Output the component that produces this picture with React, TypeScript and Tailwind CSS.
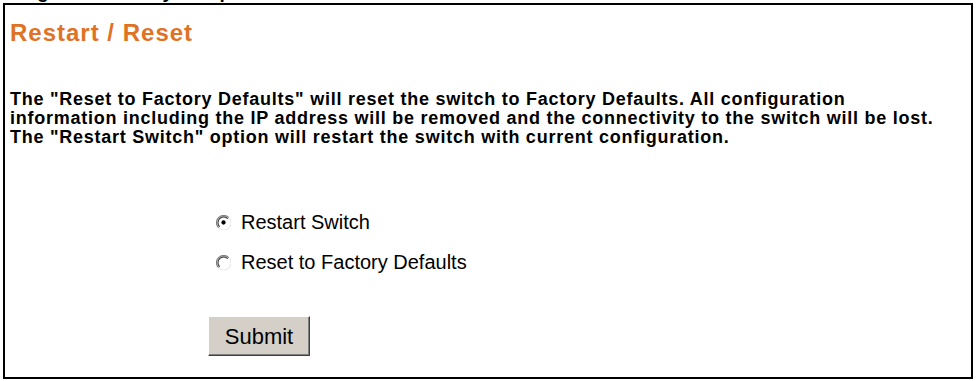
import React from "react"

const FONT = { fontFamily: '"Liberation Sans", Arial, sans-serif' }

function Radio({ checked }: { checked?: boolean }) {
  return (
    <svg width="15" height="15" viewBox="0 0 14 14" className="shrink-0">
      <circle cx="7" cy="7" r="6.5" fill="#fff" />
      <path d="M12 2.4 A6.5 6.5 0 0 0 2.4 12" fill="none" stroke="#808080" strokeWidth="1.1" />
      <path d="M11 3.4 A5.3 5.3 0 0 0 3.4 11" fill="none" stroke="#404040" strokeWidth="1.1" />
      <path d="M2.4 12 A6.5 6.5 0 0 0 12 2.4" fill="none" stroke="#e8e8e8" strokeWidth="1" />
      {checked && <circle cx="7" cy="7" r="2" fill="#000" />}
    </svg>
  )
}

export default function App() {
  return (
    <div className="w-[976px] h-[381px] bg-white overflow-hidden" style={FONT}>
      <div className="h-[3px] overflow-hidden">
        <div className="-mt-[18px] pl-[20px] text-[19px] font-bold leading-[20px] text-black whitespace-nowrap">
          Figure 61&nbsp;&nbsp;&nbsp;Utility Setup: Restart / Reset
        </div>
      </div>
      <div className="ml-[3px] w-[970px] h-[376px] border-2 border-black px-[5px]">
        <h1 className="pt-[16px] text-[24px] leading-[24px] tracking-[1px] font-bold text-[#e07226]">Restart / Reset</h1>
        <p className="mt-[45px] text-[18px] leading-[19px] tracking-[0.75px] font-bold text-black">
          The "Reset to Factory Defaults" will reset the switch to Factory Defaults. All configuration
          <br />
          information including the IP address will be removed and the connectivity to the switch will be lost.
          <br />
          The "Restart Switch" option will restart the switch with current configuration.
        </p>
        <div className="ml-[206px] mt-[65px] flex flex-col gap-[20px] text-[20px] leading-[20px] text-black">
          <label className="flex items-center gap-[10px]">
            <Radio checked />
            <span>Restart Switch</span>
          </label>
          <label className="flex items-center gap-[10px]">
            <Radio />
            <span>Reset to Factory Defaults</span>
          </label>
        </div>
        <button className="ml-[198px] mt-[44px] w-[102px] h-[40px] bg-[#d4d0c8] text-[22px] text-black border border-t-white border-l-white border-b-[#404040] border-r-[#404040] shadow-[inset_-1px_-1px_0_#808080]">
          Submit
        </button>
      </div>
    </div>
  )
}
